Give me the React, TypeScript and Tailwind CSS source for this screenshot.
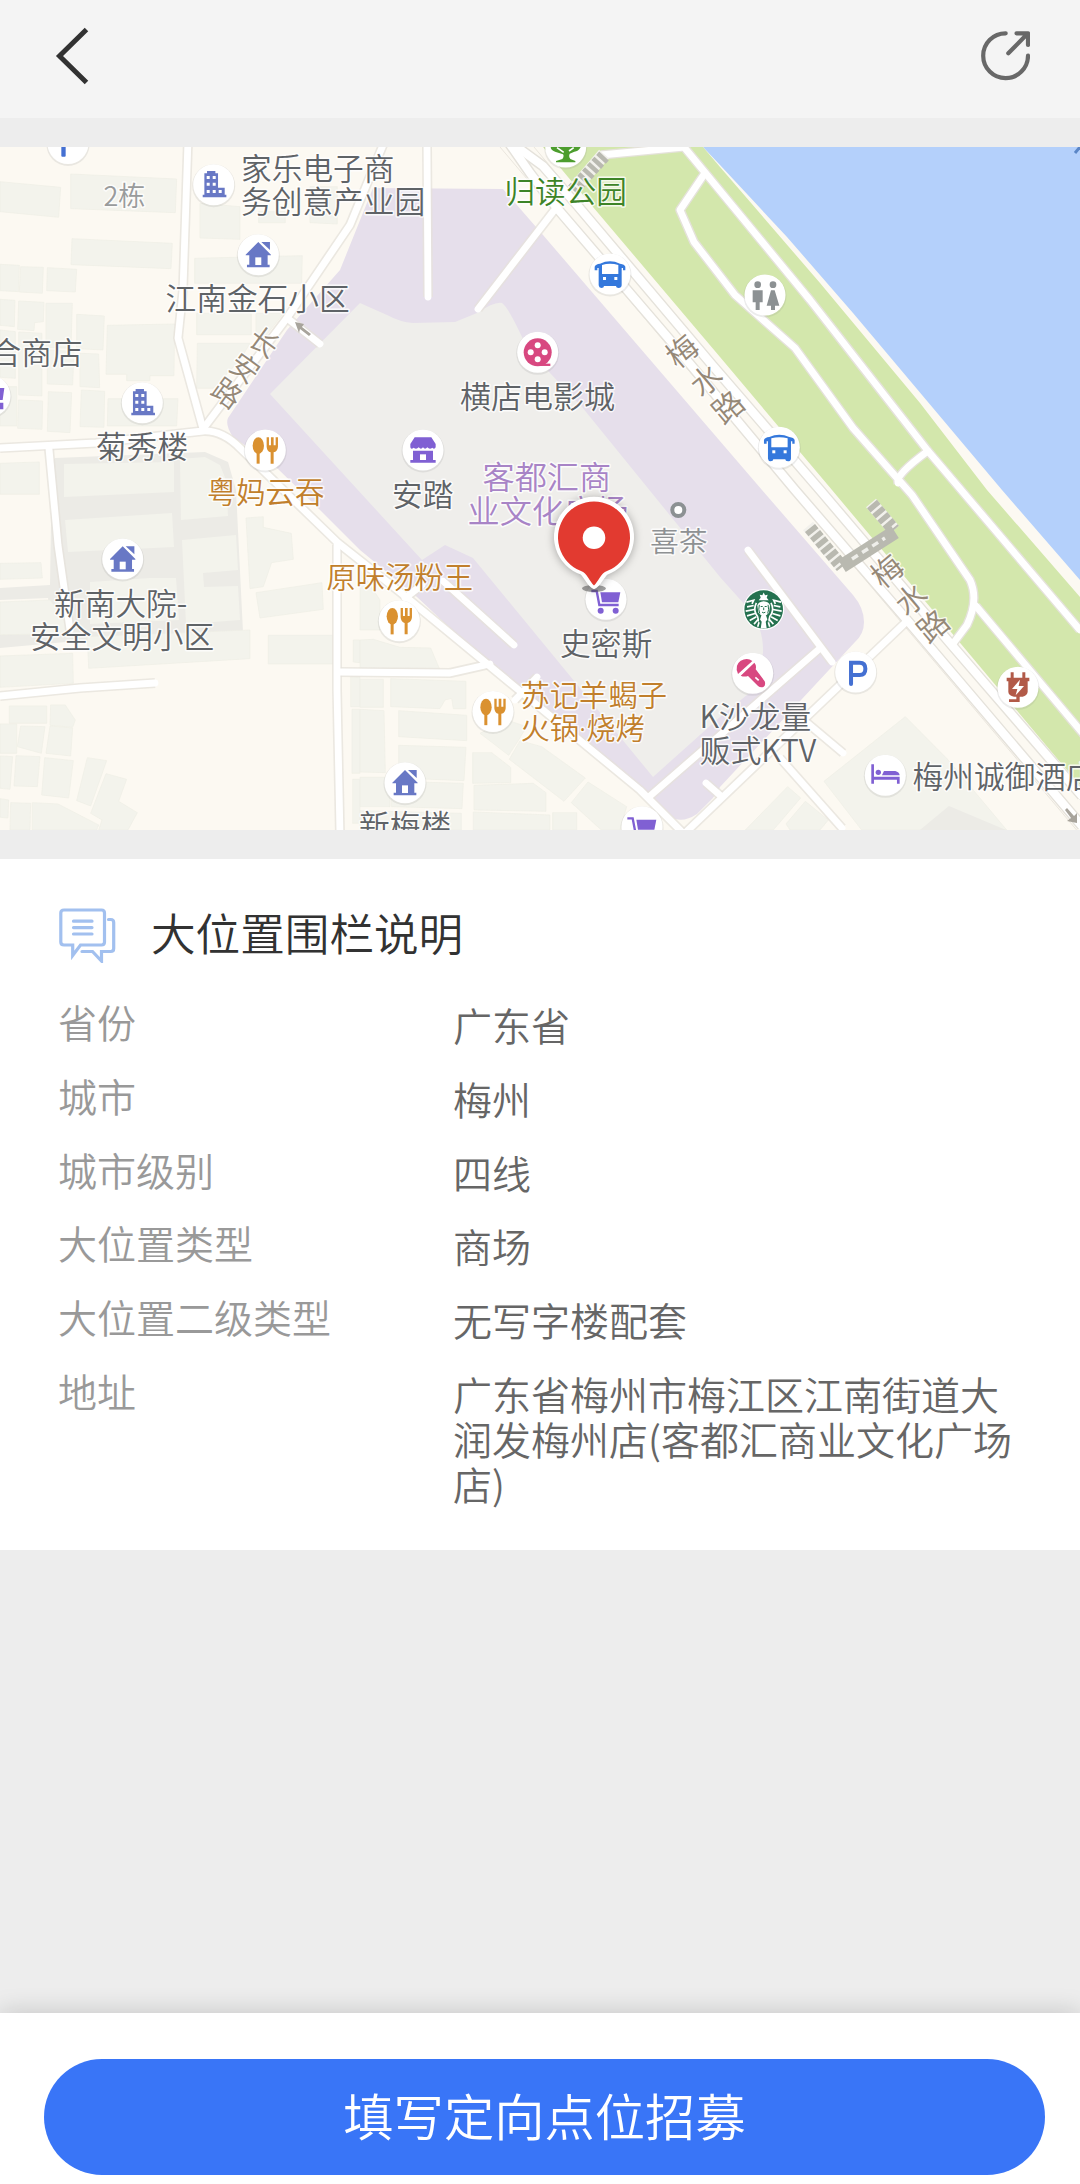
import React, { FC, ReactNode } from "react";

interface IInfoRow {
	label: string;
	value: string;
}

interface IMapLabel {
	text: string;
	x: number;
	y: number;
	size: number;
	color: string;
	rotate?: number;
	font?: string;
}

const rows: IInfoRow[] = [
	{ label: "省份", value: "广东省" },
	{ label: "城市", value: "梅州" },
	{ label: "城市级别", value: "四线" },
	{ label: "大位置类型", value: "商场" },
	{ label: "大位置二级类型", value: "无写字楼配套" },
	{
		label: "地址",
		value: "广东省梅州市梅江区江南街道大润发梅州店(客都汇商业文化广场店)",
	},
];

const GRAY = "#5f6367";
const ORANGE = "#c17f2c";
const PURPLE = "#a884c6";
const ROAD = "#958877";

const labels: IMapLabel[] = [
	{ text: "家乐电子商", x: 241, y: 179.5, size: 30.7, color: GRAY },
	{ text: "务创意产业园", x: 241, y: 213, size: 30.7, color: GRAY },
	{ text: "2栋", x: 103.5, y: 206, size: 27, color: "#999b9c" },
	{ text: "江南金石小区", x: 165.5, y: 310, size: 30.7, color: GRAY },
	{ text: "合商店", x: -9.5, y: 364, size: 30.7, color: GRAY },
	{ text: "菊秀楼", x: 96, y: 457.5, size: 30.7, color: GRAY },
	{ text: "归读公园", x: 504.5, y: 202.5, size: 30.6, color: "#3d8427" },
	{ text: "横店电影城", x: 460, y: 407.5, size: 31, color: GRAY },
	{ text: "安踏", x: 392, y: 505.5, size: 30.7, color: GRAY },
	{ text: "客都汇商", x: 482.5, y: 488.5, size: 32.2, color: PURPLE },
	{ text: "业文化广场", x: 467.5, y: 523, size: 32.2, color: PURPLE },
	{ text: "喜茶", x: 650, y: 552, size: 28.8, color: "#8e9193" },
	{ text: "史密斯", x: 560, y: 654.5, size: 30.8, color: GRAY },
	{ text: "粤妈云吞", x: 207, y: 503, size: 29.3, color: ORANGE },
	{ text: "原味汤粉王", x: 326.5, y: 587.5, size: 29.3, color: ORANGE },
	{ text: "苏记羊蝎子", x: 520.5, y: 705.5, size: 29.3, color: ORANGE },
	{
		text: "火锅·烧烤",
		x: 520.5,
		y: 738.5,
		size: 29.3,
		color: ORANGE,
		font: '"Noto Sans", "Noto Sans CJK SC", sans-serif',
	},
	{ text: "新南大院-", x: 54, y: 614.5, size: 30.7, color: GRAY },
	{ text: "安全文明小区", x: 30, y: 647.5, size: 30.7, color: GRAY },
	{ text: "新梅楼", x: 359, y: 836.5, size: 30.7, color: GRAY },
	{ text: "K沙龙量", x: 699.5, y: 728, size: 30.7, color: GRAY },
	{ text: "贩式KTV", x: 699.5, y: 761.5, size: 30.9, color: GRAY },
	{ text: "梅州诚御酒店", x: 912.5, y: 787.5, size: 30.7, color: GRAY },
];

// road names are set one character at a time, x/y is the glyph centre
const roadLabels: IMapLabel[] = [
	{ text: "长", x: 264, y: 342, size: 29, color: ROAD, rotate: 36 },
	{ text: "安", x: 245, y: 368, size: 29, color: ROAD, rotate: 36 },
	{ text: "路", x: 227, y: 393, size: 29, color: ROAD, rotate: 36 },
	{ text: "梅", x: 682, y: 351, size: 31, color: ROAD, rotate: -40 },
	{ text: "水", x: 706, y: 380, size: 31, color: ROAD, rotate: -40 },
	{ text: "路", x: 728, y: 407, size: 31, color: ROAD, rotate: -40 },
	{ text: "梅", x: 887, y: 571, size: 31, color: ROAD, rotate: -40 },
	{ text: "水", x: 911, y: 599, size: 31, color: ROAD, rotate: -40 },
	{ text: "路", x: 933, y: 626, size: 31, color: ROAD, rotate: -40 },
];

// building outlines, grouped by map tile (tile units are a third of a pixel)
const tiles: { x: number; y: number; shapes: string[] }[] = [
	{
		x: 0,
		y: 140,
		shapes: [
			"0,125 182,142 176,232 0,215",
			"212,102 530,117 526,218 212,206",
			"216,296 517,310 513,386 213,374",
			"0,373 58,376 56,455 0,452",
			"62,380 130,382 127,460 58,456",
			"142,383 230,388 226,456 140,452",
			"0,478 45,481 43,560 0,556",
			"56,483 132,487 130,545 104,548 102,572 53,568",
			"138,490 217,490 213,625 138,622",
			"230,523 313,528 309,630 230,626",
			"322,556 524,552 522,707 450,707 450,722 380,722 380,703 318,703",
			"240,640 296,642 299,743 240,740",
			"0,570 46,575 46,715 0,712",
			"56,576 126,580 126,768 56,765",
			"142,630 222,634 218,735 142,732",
			"0,740 50,740 50,858 0,858",
			"55,780 128,783 126,868 53,865",
			"145,755 215,758 210,878 142,874",
			"244,750 314,754 312,862 240,860",
			"324,776 534,776 530,858 322,858",
			"600,190 720,200 720,298 600,294",
			"776,215 856,215 856,248 776,248",
			"930,140 1012,140 1012,252 930,248",
			"584,355 907,347 905,430 584,430",
			"590,520 754,520 754,584 590,584",
			"768,520 850,520 800,585 768,585",
			"592,610 750,610 720,660 640,745 590,745",
			"0,970 118,966 118,1063 0,1063",
		],
	},
	{
		x: 0,
		y: 490,
		shapes: [
			"0,220 123,218 127,264 0,268",
			"0,336 150,330 205,400 205,432 0,434",
			"738,84 790,80 790,112 874,130 880,208 815,218 790,290 750,296",
			"768,308 966,278 970,358 780,384",
			"805,436 998,436 998,522 805,522",
			"262,440 750,420 750,506 266,535",
			"0,498 218,490 220,580 0,592",
			"28,648 140,648 140,700 28,700",
			"152,645 196,645 226,690 218,712 150,706",
			"0,702 50,702 50,790 0,790",
			"62,708 135,710 124,790 52,770",
			"150,708 218,714 212,798 138,790",
			"0,798 38,800 30,898 0,895",
			"48,797 120,800 112,890 42,888",
			"134,803 220,812 206,924 125,915",
			"262,803 320,812 272,948 230,932",
			"318,851 380,868 356,934 412,968 384,1020 296,1020 306,990 272,970",
			"0,926 26,930 24,984 0,982",
			"32,938 92,940 90,1020 30,1020",
			"97,938 174,942 296,1005 290,1020 97,1020",
			"1060,450 1080,450 1080,518 1060,516",
			"1052,560 1080,560 1080,650 1052,650",
			"1056,658 1080,658 1080,850 1056,850",
			"1058,868 1080,868 1080,1000 1058,1000",
		],
	},
	{
		x: 360,
		y: 490,
		shapes: [
			"0,240 60,330 60,420 0,420",
			"120,472 212,474 240,540 0,536 0,450 40,448",
			"0,568 70,568 70,652 0,652",
			"92,566 318,574 318,656 280,656 275,625 255,630 240,656 92,650",
			"0,658 72,662 76,848 0,846",
			"116,662 320,676 320,752 116,740",
			"116,766 318,772 312,872 116,864",
			"338,788 395,788 452,832 452,878 338,880",
			"360,730 440,690 500,710 476,750 446,796",
			"480,752 545,770 676,864 612,934 448,808",
			"684,876 800,950 780,1020 724,1020 634,938",
			"342,886 520,880 558,908 558,964 342,960",
			"94,874 310,880 306,956 94,950",
			"340,966 570,975 570,1020 340,1020",
			"578,968 650,968 650,1020 578,1020",
			"0,862 90,862 90,950 0,950",
			"0,962 304,970 304,1020 0,1020",
		],
	},
	{
		x: 720,
		y: 490,
		shapes: [
			"556,680 680,805 860,1020 425,1020 312,874",
			"203,890 242,924 160,1020 76,1020",
			"256,934 325,990 300,1020 210,1020 198,1002",
		],
	},
];

const compound: string[] = [
	"52,463 55,458 205,452 228,462 236,490 243,632 66,642 0,648 0,634 52,630 48,598 0,600 0,588 50,585",
];

const yards: string[] = [
	"64,464 174,462 174,490 174,492 64,497",
	"180,459 205,457 220,465 226,480 228,516 181,520",
	"65,520 172,513 174,547 68,552",
	"182,540 236,535 238,570 203,573 204,587 238,586 240,620 186,624",
	"90,582 150,578 176,578 179,620 90,624",
];

const minorRoads: string[] = [
	"M188 140L183 290L178 338L203 429",
	"M0 448L96 443L203 431Q222 430 240 448L338 543L400 592L640 790L690 840",
	"M203 429L287 318L350 225L383 145",
	"M287 318L320 344",
	"M49 449L58 545L70 630",
	"M0 696L80 688L155 683",
	"M337 545L337 690L340 835",
	"M340 672L450 673L490 664",
	"M427 147L428 297",
	"M556 208L478 309",
	"M405 598L422 585",
	"M443 581L514 645",
	"M515 700L537 677",
	"M650 796L818 650",
	"M748 550L832 662",
	"M684 834L906 622",
	"M706 783L722 797",
	"M806 722L843 753",
	"M780 758L842 828",
];

const parkRoads: string[] = [
	"M601 155L684 147L810 300L928 451L1080 630",
	"M705 173L680 210L694 242L735 295L795 348L853 428L912 495L970 580Q979 600 967 625L952 645",
	"M898 483Q895 475 928 451",
	"M976 606L1090 742",
];

const mainRoads: string[] = [
	"M507 140L530 173L556 207L670 340L795 490L907 620L1082 826",
	"M517 147L543 166L577 205L713 366L820 490L950 643L1082 796",
];

const Pin: FC<{ x: number; y: number; children?: ReactNode }> = ({
	x,
	y,
	children,
}) => (
	<g transform={`translate(${x} ${y})`}>
		<circle r="21.5" cy="1" fill="#8a8a8a" opacity=".16" />
		<circle r="20.5" fill="#fff" />
		<g transform="scale(.3333)">{children}</g>
	</g>
);

const House: FC = () => (
	<g fill="#6878c5">
		<path d="M-38 0L0-38L38 0V2H28V30H34V38H-34V30H-27V2H-38Z" />
		<path d="M9-38H35V-14Z" />
		<rect x="-9" y="8" width="18" height="23" fill="#fff" />
	</g>
);

const Building: FC = () => (
	<g>
		<path
			fill="#6878c5"
			d="M-28-34H-20V-41H5V-34H13V9H33V30H38V38H-33V30H-28Z"
		/>
		<path
			fill="#fff"
			d="M-21-26h9v9h-9zM-3-26h9v9h-9zM-21-6h9v9h-9zM-3-6h9v9h-9zM-21 16h9v9h-9zM-3 16h9v9h-9zM15 16h9v9h-9z"
		/>
	</g>
);

const Food: FC = () => (
	<g fill="#da9130">
		<ellipse cx="-21" cy="-13" rx="17" ry="25" />
		<rect x="-26" y="5" width="9" height="36" />
		<path d="M4-38H11V-14H17V-38H25V-14H31V-38H38V-10Q37 4 25 7V41H16V7Q5 4 4-10Z" />
	</g>
);

const Bus: FC = () => (
	<g fill="#3478dc">
		<path d="M-30-31Q0-45 30-31Q44-29 46-22V-11H39V-18H35V34Q34 42 26 42Q18 42 18 36H-18Q-18 42-26 42Q-33 42-34 34V-18H-38V-11H-46V-22Q-43-30-30-31Z" />
		<path d="M-24-27Q0-34 25-27V0H-24Z" fill="#fff" />
		<rect x="-21" y="9" width="9" height="9" fill="#fff" />
		<rect x="13" y="9" width="9" height="9" fill="#fff" />
	</g>
);

const Cart: FC = () => (
	<g>
		<path
			d="M-44-25H-28L-20 17H38"
			fill="none"
			stroke="#8060d3"
			strokeWidth="7"
		/>
		<path d="M-17-21H43L37 9H-12Z" fill="#8060d3" />
		<circle cx="-16" cy="34" r="9" fill="#8060d3" />
		<circle cx="29" cy="34" r="9" fill="#8060d3" />
	</g>
);

const Coffee: FC = () => (
	<g transform="translate(763.7 609.5)">
		<circle r="20.5" fill="#fff" />
		<circle r="19.3" fill="#24714f" />
		<g transform="scale(.3333)" fill="#fff">
			<path d="M0-51L4-43L12-44L9-35L15-28H-15L-9-35L-12-44L-4-43Z" />
			<path d="M-19-12Q-16-24 0-25Q16-24 19-12L16 10Q8 20 0 20Q-8 20-16 10Z" />
			<path d="M-7 18Q0 10 7 18L11 30L6 37L9 57H-9L-6 37L-11 30Z" />
			<g fill="none" stroke="#fff" strokeWidth="5">
				<path d="M-52-22L-30-28L-35-17M-50-8L-30-12M-54 5L-28 0M-50 19L-26 12M-42 33L-22 22M-29 44L-17 30M-18 52L-14 38" />
				<path d="M52-22L30-28L35-17M50-8L30-12M54 5L28 0M50 19L26 12M42 33L22 22M29 44L17 30M18 52L14 38" />
				<path d="M-22-20Q-31-2-23 14Q-14 24-17 36M22-20Q31-2 23 14Q14 24 17 36" />
			</g>
			<g fill="none" stroke="#24714f" strokeWidth="3">
				<path d="M-9-9H-3M3-9H9M0-6V2M-5 8Q0 12 5 8M-13-14Q-17 0-12 12M13-14Q17 0 12 12" />
			</g>
		</g>
	</g>
);

const CityMap: FC = () => (
	<svg
		className="block w-full h-[683px]"
		viewBox="0 147 1080 683"
		fontFamily='"Noto Sans CJK SC", sans-serif'
	>
		<rect y="147" width="1080" height="683" fill="#fcf9f2" />
		{compound.map((p) => (
			<polygon key={p} points={p} fill="#ecebe6" />
		))}
		{yards.map((p) => (
			<polygon key={p} points={p} fill="#f3f3ec" />
		))}
		{tiles.map((tile) => (
			<g
				key={`${tile.x}-${tile.y}`}
				transform={`translate(${tile.x} ${tile.y}) scale(.3333)`}
				fill="#f3f3ec"
				stroke="#eeeee6"
				strokeWidth="2"
			>
				{tile.shapes.map((p) => (
					<polygon key={p} points={p} />
				))}
			</g>
		))}
		<polygon points="949,806 1006,830 920,830" fill="#ecebe6" />

		<polygon
			points="703,147 720,165 787,237 853,313 1002,490 1080,580 1080,147"
			fill="#b4d0fb"
		/>
		<polygon
			points="543,147 703,147 720,167 820,283 920,403 987,490 1080,597 1080,785 1060,762 832,490 720,357 593,207"
			fill="#d3e7ac"
		/>
		<path
			d="M373 188L503 189L543 235L762 490L853 595Q864 608 864 622Q864 634 855 642L720 787L713 798L697 814Q685 822 675 819L648 793L577 737L487 663L417 597L360 550L317 507L277 468L233 437Q225 425 228 418L287 330L340 270Z"
			fill="#e6dfeb"
		/>
		<path
			d="M270 394L360 303L387 315Q400 322 413 323L455 322L477 313Q495 301 502 303Q508 307 522 337L550 373L582 407L720 577L745 605Q764 625 763 653L753 690L720 717L653 777L473 558L445 545L422 560Z"
			fill="#efeeeb"
		/>

		<g fill="none" strokeLinejoin="round">
			<path
				d="M534 147L1080 800M500 147L1080 834"
				stroke="#eae6de"
				strokeWidth="1"
			/>
			<g stroke="#e5e2db" strokeWidth="11">
				{minorRoads.map((d) => (
					<path key={d} d={d} opacity=".75" strokeWidth={10} />
				))}
				{parkRoads.map((d) => (
					<path key={d} d={d} strokeWidth={9.5} />
				))}
				{mainRoads.map((d) => (
					<path key={d} d={d} />
				))}
			</g>
			<g stroke="#fff" strokeLinecap="round">
				{minorRoads.map((d) => (
					<path key={d} d={d} strokeWidth="6.8" />
				))}
				{parkRoads.map((d) => (
					<path key={d} d={d} strokeWidth="6.8" />
				))}
				{mainRoads.map((d) => (
					<path key={d} d={d} strokeWidth="8.2" />
				))}
			</g>
			{/* footbridges over the river road */}
			<g stroke="#f2f1ec" strokeWidth="13">
				<path d="M604 154L573 190M808 526L842 567M871 503L894 530" />
			</g>
			<g stroke="#b9b9b0">
				<path d="M604 156L573 190" strokeWidth="13" strokeDasharray="4.500 2.500" />
				<path d="M810 528L842 567" strokeWidth="13" strokeDasharray="5.500 2.500" />
				<path d="M872 504L894 530" strokeWidth="13" strokeDasharray="5.500 2.500" />
				<path d="M842 566L895 532" strokeWidth="14" />
				<path
					d="M852 559L885 538"
					strokeWidth="3.500"
					strokeDasharray="7 5"
					stroke="#eeeeea"
				/>
			</g>
			<g stroke="none" fill="#a8a49c">
				<path d="M295 322L304 324L302 327L311 334L309 336L300 329L299 333Z" />
				<path d="M1065 810L1067 808L1074 816L1077 813L1077 823L1067 821L1071 818Z" />
			</g>
		</g>

		<g
			paintOrder="stroke"
			stroke="#fff"
			strokeOpacity=".8"
			strokeWidth="3"
			strokeLinejoin="round"
		>
			{roadLabels.map((l) => (
				<text
					key={`${l.x}-${l.y}`}
					transform={`translate(${l.x} ${l.y}) rotate(${l.rotate})`}
					y={l.size * 0.37}
					textAnchor="middle"
					fontSize={l.size}
					fill={l.color}
				>
					{l.text}
				</text>
			))}
			{labels.map((l) => (
				<text
					key={l.text}
					x={l.x}
					y={l.y}
					fontSize={l.size}
					fill={l.color}
					fontFamily={l.font}
				>
					{l.text}
				</text>
			))}
		</g>
		<path d="M1075 153L1080 147" stroke="#5b86c6" strokeWidth="3" />

		<Pin x={68} y={143.5}>
			<rect x="-20" y="-20" width="13" height="60" rx="3" fill="#4470d2" />
		</Pin>
		<Pin x={-10} y={396}>
			<path d="M20-24H43L38 12H20ZM28 20H40V40H28Z" fill="#8060d3" />
		</Pin>
		<Pin x={213.7} y={184.7}>
			<Building />
		</Pin>
		<Pin x={142.3} y={402.7}>
			<Building />
		</Pin>
		<Pin x={258.3} y={254.7}>
			<House />
		</Pin>
		<Pin x={122.7} y={559}>
			<House />
		</Pin>
		<Pin x={405} y={782.7}>
			<House />
		</Pin>
		<Pin x={265.3} y={450}>
			<Food />
		</Pin>
		<Pin x={399.3} y={620.7}>
			<Food />
		</Pin>
		<Pin x={493} y={711.5}>
			<Food />
		</Pin>
		<Pin x={565.7} y={147}>
			<path
				fill="#4c9d2d"
				d="M-45-20H45V0Q38 14 26 14L12 20Q8 30 14 36L29 42V46H-29V42L-10 36Q-4 28-8 22L-32 14Q-45 10-45 0Z"
			/>
			<path d="M-26 2L-6 16M24 2L10 12" stroke="#fff" strokeWidth="5" />
		</Pin>
		<Pin x={610} y={274}>
			<Bus />
		</Pin>
		<Pin x={779.3} y={447.3}>
			<Bus />
		</Pin>
		<Pin x={537.7} y={352.3}>
			<circle r="42" fill="#d84880" />
			<path d="M5 34H38V41H5Z" fill="#d84880" />
			<g fill="#fff">
				<circle cy="-21" r="9" />
				<circle cy="21" r="9" />
				<circle cx="-21" r="9" />
				<circle cx="21" r="9" />
			</g>
		</Pin>
		<Pin x={423} y={450}>
			<path
				fill="#8060d3"
				d="M-25-38H25L38-18V-8Q34 0 28-7Q20 0 13-8Q6 0 0-8Q-6 0-13-8Q-20 0-28-7Q-36 0-38-8V-18ZM-30 2H30V30H38V38H-38V30H-30Z"
			/>
			<rect x="-9" y="13" width="18" height="17" fill="#fff" />
		</Pin>
		<Pin x={765} y={295}>
			<g fill="#8c9193">
				<circle cx="-22" cy="-31" r="10" />
				<circle cx="24" cy="-31" r="10" />
				<path d="M-37-14H-7V22H-16V45H-28V22H-37Z" />
				<path d="M18-14H29L43 32H30V45H18V32H5Z" />
			</g>
		</Pin>
		<Pin x={606} y={599.3}>
			<Cart />
		</Pin>
		<Pin x={642} y={826.7}>
			<Cart />
		</Pin>
		<Pin x={752.7} y={673.3}>
			<g fill="#d84880">
				<path d="M-44 2Q-56-24-36-38Q-16-48-1-37Z" />
				<path d="M-36 7L5-32Q12-24 9-12L36 24Q40 37 32 41Q22 43 16 38L-14 8Q-26 12-36 7Z" />
				<path d="M8 12L18 21" stroke="#fff" strokeWidth="5" />
			</g>
		</Pin>
		<Pin x={855.7} y={672}>
			<path
				d="M-14 36V-28H12Q29-28 29-10Q29 9 12 9H-14"
				fill="none"
				stroke="#4470d2"
				strokeWidth="12"
				strokeLinecap="round"
			/>
		</Pin>
		<Pin x={1018} y={687.3}>
			<path
				fill="#b25a48"
				d="M-22-45H-13V-29H13V-45H22V-29H34V-18H29V14Q27 25 14 28H5V44H-27V36H-5V28H-12Q-28 25-29 14V-18H-34V-29H-22Z"
			/>
			<path d="M6-23L-18 5H-2L-7 24L18-4H2Z" fill="#fff" />
		</Pin>
		<Pin x={885.3} y={775.3}>
			<g fill="#8060d3">
				<path d="M-42-33H-34V4H43V25H35V13H-34V25H-42Z" />
				<circle cx="-21" cy="-9" r="8" />
				<path d="M-10 0L-4-13H30Q42-10 43 0Z" />
			</g>
		</Pin>
		<Coffee />
		<circle
			cx="678.3"
			cy="510"
			r="6"
			fill="#fff"
			stroke="#8c9193"
			strokeWidth="4"
		/>

		<ellipse cx="594" cy="588.5" rx="12" ry="3.5" fill="#555" opacity=".55" />
		<path
			d="M594 587C589 586 585 574 581 572.5A38 38 0 1 1 607 572.5C603 574 599 586 594 587Z"
			fill="#fff"
			stroke="#fff"
			strokeWidth="4"
			className="drop-shadow-[0_1px_4px_rgba(0,0,0,0.3)]"
		/>
		<path
			d="M594 585.5C590 582 587 573 581 571A36 36 0 1 1 607 571C601 573 598 582 594 585.5Z"
			fill="#e23a30"
		/>
		<circle cx="594" cy="537.7" r="11.3" fill="#fff" />
	</svg>
);

const ChatIcon: FC = () => (
	<svg
		className="w-[58px] h-[56px] shrink-0"
		viewBox="58 907 58 56"
		fill="none"
		stroke="#a2c0ef"
		strokeWidth="3.2"
		strokeLinecap="round"
	>
		<path d="M64 910H101.5Q104.5 910 104.5 913V942Q104.5 945 101.5 945H80.5L72.7 955.5V945H64Q60.8 945 60.8 942V913Q60.8 910 64 910Z" />
		<path d="M108.5 919.5H110.7Q113.7 919.5 113.7 922.5V948.5Q113.7 951.5 110.7 951.5H101.5V961L92.5 951.5H82" />
		<path d="M73.5 921.2H92M73.5 927.6H92M73.5 934H92" />
	</svg>
);

const App: FC = () => {
	return (
		<div className="min-h-screen flex flex-col bg-[#ededed] font-['Noto_Sans_CJK_SC',sans-serif] font-[350]">
			<header className="h-[118px] shrink-0 bg-[#f4f4f4] flex justify-between items-start px-[50px] pt-[24px]">
				<button aria-label="返回">
					<svg className="w-[44px] h-[64px]" viewBox="50 24 44 64" fill="none">
						<path
							d="M86.5 29.5L59.5 56L86.5 82.5"
							stroke="#323232"
							strokeWidth="5"
						/>
					</svg>
				</button>
				<button aria-label="分享">
					<svg
						className="w-[54px] h-[64px]"
						viewBox="976 24 54 64"
						fill="none"
						stroke="#686868"
						strokeWidth="4.2"
						strokeLinecap="round"
						strokeLinejoin="round"
					>
						<path d="M1005.7 33.3A22.4 22.4 0 1 0 1028 55.7" />
						<path d="M1008.3 53.3L1027.7 33.5M1016.5 33.3H1028V45" />
					</svg>
				</button>
			</header>

			<section className="mt-[29px] overflow-hidden">
				<CityMap />
			</section>

			<section className="mt-[29px] h-[691px] bg-white px-[58px] pt-[48px]">
				<div className="flex items-start h-[56px]">
					<ChatIcon />
					<h2 className="ml-[35px] text-[44.6px] leading-[50px] text-[#323232]">
						大位置围栏说明
					</h2>
				</div>
				<ul className="mt-[36px] flex flex-col gap-[28.8px]">
					{rows.map((row) => (
						<li
							className="flex items-start leading-[45px] text-[39px]"
							key={row.label}
						>
							<span className="w-[395px] shrink-0 text-[#999999]">
								{row.label}
							</span>
							<span className="w-[568px] -mb-[3px] pt-[3px] text-[#666666] break-all">
								{row.value}
							</span>
						</li>
					))}
				</ul>
			</section>

			<footer className="mt-auto h-[171px] bg-white pt-[46px] pl-[44px] pr-[35px] shadow-[0_0_24px_rgba(0,0,0,0.18)]">
				<button className="w-full h-[116px] pb-[5px] rounded-full bg-[#3975f7] text-white text-[50.3px] leading-[111px]">
					填写定向点位招募
				</button>
			</footer>
		</div>
	);
};

export default App;
